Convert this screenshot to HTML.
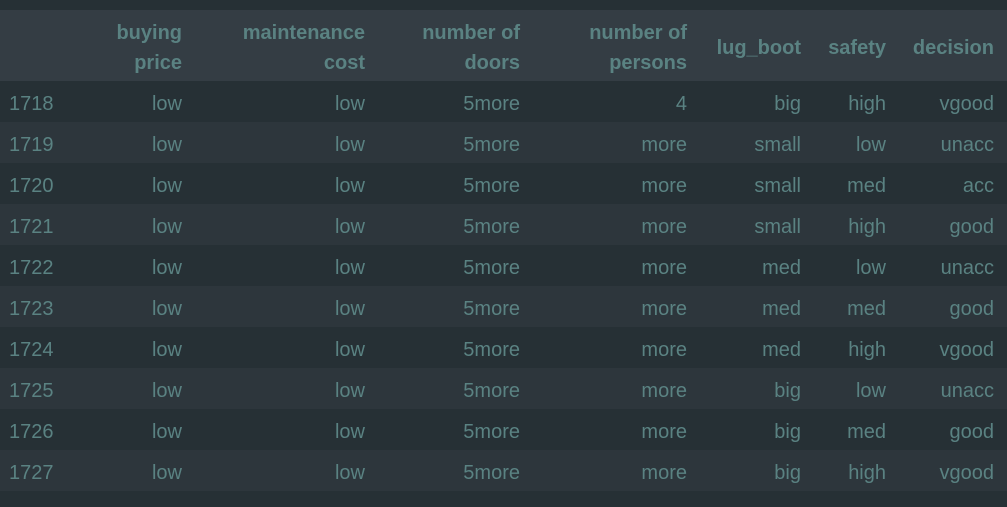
<html><head><style>
body{margin:0;background:#263035;width:1007px;height:507px;overflow:hidden;font-family:"Liberation Sans","DejaVu Sans",sans-serif;}
table{position:absolute;top:10px;left:0;width:1007px;border-collapse:collapse;color:#5a8282;font-size:20px;}
th,td{padding:0;text-align:right;white-space:nowrap}
thead tr{background:#343d44;height:71px}
th{font-weight:bold;line-height:30px;vertical-align:middle;padding-top:4px;box-sizing:border-box}
tbody tr{height:41px}
td{padding-top:5px;box-sizing:border-box}
tbody tr:nth-child(odd){background:#263035}
tbody tr:nth-child(even){background:#2d363c}
td:first-child{text-align:left;padding-left:9px}
</style></head><body>
<table>
<colgroup><col style="width:100px"><col style="width:82px"><col style="width:183px"><col style="width:155px"><col style="width:167px"><col style="width:114px"><col style="width:85px"><col style="width:108px"><col></colgroup>
<thead><tr><th></th><th>buying<br>price</th><th>maintenance<br>cost</th><th>number of<br>doors</th><th>number of<br>persons</th><th>lug_boot</th><th>safety</th><th>decision</th><th></th></tr></thead>
<tbody>
<tr><td>1718</td><td>low</td><td>low</td><td>5more</td><td>4</td><td>big</td><td>high</td><td>vgood</td><td></td></tr>
<tr><td>1719</td><td>low</td><td>low</td><td>5more</td><td>more</td><td>small</td><td>low</td><td>unacc</td><td></td></tr>
<tr><td>1720</td><td>low</td><td>low</td><td>5more</td><td>more</td><td>small</td><td>med</td><td>acc</td><td></td></tr>
<tr><td>1721</td><td>low</td><td>low</td><td>5more</td><td>more</td><td>small</td><td>high</td><td>good</td><td></td></tr>
<tr><td>1722</td><td>low</td><td>low</td><td>5more</td><td>more</td><td>med</td><td>low</td><td>unacc</td><td></td></tr>
<tr><td>1723</td><td>low</td><td>low</td><td>5more</td><td>more</td><td>med</td><td>med</td><td>good</td><td></td></tr>
<tr><td>1724</td><td>low</td><td>low</td><td>5more</td><td>more</td><td>med</td><td>high</td><td>vgood</td><td></td></tr>
<tr><td>1725</td><td>low</td><td>low</td><td>5more</td><td>more</td><td>big</td><td>low</td><td>unacc</td><td></td></tr>
<tr><td>1726</td><td>low</td><td>low</td><td>5more</td><td>more</td><td>big</td><td>med</td><td>good</td><td></td></tr>
<tr><td>1727</td><td>low</td><td>low</td><td>5more</td><td>more</td><td>big</td><td>high</td><td>vgood</td><td></td></tr>
</tbody></table>
</body></html>
